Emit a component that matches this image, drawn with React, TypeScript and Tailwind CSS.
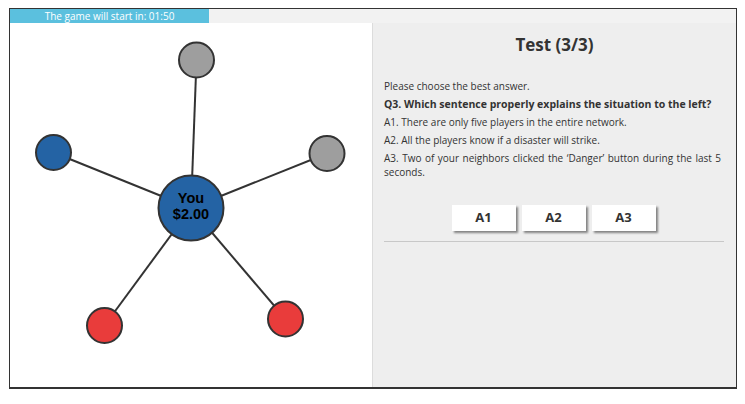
import React from 'react';

type Node = { x: number; y: number; fill: string };

// page coordinates minus the panel origin (10, 23)
const OX = 10;
const OY = 23;
const CENTER = { x: 191 - OX, y: 208 - OY };

const neighbors: Node[] = [
  { x: 196.5 - OX, y: 60 - OY, fill: '#9e9e9e' },
  { x: 327 - OX, y: 153.5 - OY, fill: '#9e9e9e' },
  { x: 53.5 - OX, y: 152.5 - OY, fill: '#2463a4' },
  { x: 104.5 - OX, y: 325.5 - OY, fill: '#e93c3b' },
  { x: 285.5 - OX, y: 319 - OY, fill: '#e93c3b' },
];

function NetworkGraph() {
  return (
    <svg width="362" height="364" viewBox="0 0 362 364" className="block">
      {neighbors.map((n, i) => (
        <line key={`l${i}`} x1={CENTER.x} y1={CENTER.y} x2={n.x} y2={n.y} stroke="#333" strokeWidth="2" />
      ))}
      {neighbors.map((n, i) => (
        <circle key={`c${i}`} cx={n.x} cy={n.y} r="17.5" fill={n.fill} stroke="#333" strokeWidth="2" />
      ))}
      <circle cx={CENTER.x} cy={CENTER.y} r="32.5" fill="#2463a4" stroke="#333" strokeWidth="2" />
      <text
        x={CENTER.x}
        y={CENTER.y - 5}
        textAnchor="middle"
        fontFamily="'Liberation Sans', Arial, sans-serif"
        fontWeight="bold"
        fontSize="14.5"
        fill="#000"
      >
        You
      </text>
      <text
        x={CENTER.x}
        y={CENTER.y + 11}
        textAnchor="middle"
        fontFamily="'Liberation Sans', Arial, sans-serif"
        fontWeight="bold"
        fontSize="14.5"
        fill="#000"
      >
        $2.00
      </text>
    </svg>
  );
}

function AnswerButton({ label }: { label: string }) {
  return (
    <button className="w-[64px] h-[26px] bg-white text-[13px] font-bold text-[#333] shadow-[2px_2px_2px_rgba(0,0,0,0.45)]">
      {label}
    </button>
  );
}

export default function App() {
  return (
    <div className="w-[745px] h-[404px] bg-white pl-[9px] pt-[8px] font-['Open_Sans',sans-serif]">
      <div className="w-[728px] h-[381px] border-[1.5px] border-[#333] border-b-[2px] flex flex-col">
        {/* countdown bar */}
        <div className="h-[14px] flex bg-[#f2f2f2]">
          <div className="w-[199px] bg-[#5bc0de] text-white text-[10px] leading-[14px] text-center">
            The game will start in: 01:50
          </div>
        </div>

        <div className="flex-1 flex min-h-0">
          {/* network panel */}
          <div className="w-[362px] bg-white">
            <NetworkGraph />
          </div>

          {/* question panel */}
          <div className="flex-1 bg-[#eeeeee] border-l border-[#dcdcdc] px-[11px]">
            <h1 className="text-center text-[17px] font-bold text-[#333] mt-[10px] leading-[24px]">Test (3/3)</h1>
            <div className="mt-[22px] text-[10px] text-[#333] leading-[14px] w-[337px] text-justify">
              <p>Please choose the best answer.</p>
              <p className="mt-[4px] font-bold text-[10.5px]">Q3. Which sentence properly explains the situation to the left?</p>
              <p className="mt-[4px]">A1. There are only five players in the entire network.</p>
              <p className="mt-[4px]">A2. All the players know if a disaster will strike.</p>
              <p className="mt-[4px]">A3. Two of your neighbors clicked the ‘Danger’ button during the last 5 seconds.</p>
            </div>
            <div className="mt-[26px] flex justify-center gap-[6px] pr-[2px]">
              <AnswerButton label="A1" />
              <AnswerButton label="A2" />
              <AnswerButton label="A3" />
            </div>
            <div className="mt-[10px] h-px bg-[#c8c8c8] w-[340px]" />
          </div>
        </div>
      </div>
    </div>
  );
}
